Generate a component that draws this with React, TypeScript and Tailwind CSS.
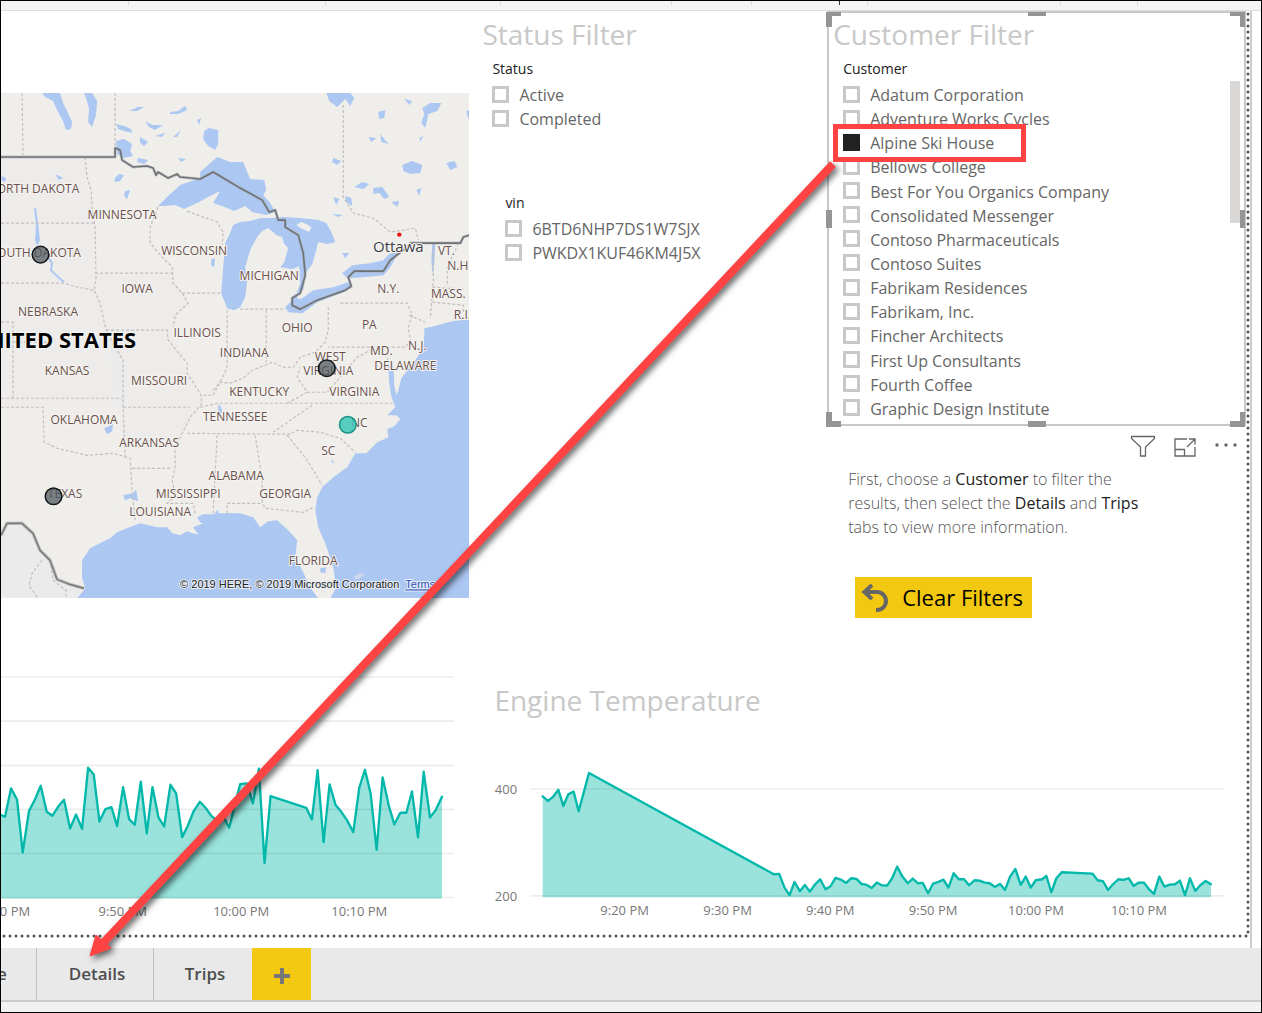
import React from "react";

const LAND = "#efeeea";
const WATER = "#abc7f2";

type Label = [string, number, number];

const STATES: Label[] = [
  ["ORTH DAKOTA", 38, 193], ["MINNESOTA", 122, 219], ["OUTH DAKOTA", 39, 257],
  ["WISCONSIN", 194, 255], ["IOWA", 137, 293], ["NEBRASKA", 48, 316],
  ["MICHIGAN", 269, 280], ["ILLINOIS", 197, 337], ["INDIANA", 244, 357],
  ["OHIO", 297, 332], ["PA", 369, 329], ["N.Y.", 388, 293], ["VT.", 446, 255],
  ["N.H.", 459, 270], ["MASS.", 448, 298], ["R.I.", 462, 319], ["N.J.", 417, 350],
  ["MD.", 381, 355], ["DELAWARE", 405, 370], ["WEST", 330, 361],
  ["VIRGINIA", 328, 375], ["VIRGINIA", 354, 396], ["KENTUCKY", 259, 396],
  ["KANSAS", 67, 375], ["MISSOURI", 159, 385], ["OKLAHOMA", 84, 424],
  ["ARKANSAS", 149, 447], ["TENNESSEE", 235, 421], ["NC", 359, 427], ["SC", 328, 455],
  ["TEXAS", 65, 498], ["MISSISSIPPI", 188, 498], ["ALABAMA", 236, 480],
  ["GEORGIA", 285, 498], ["LOUISIANA", 160, 516], ["FLORIDA", 313, 565],
];

const BORDERS = [
  "M22 93L23 155", "M115 93V148", "M85 157L87 177L91 190L92 207L95 227L96 280L94 290L100 303L106 330L117 350L123 360L123 407L125 457",
  "M1 223H95", "M1 283H63L78 287L93 290", "M95 273H172",
  "M158 207L150 227L150 243L163 258L172 267L173 283L182 293L188 303L175 315L173 327",
  "M182 293H222", "M106 330H167L168 340L187 363L187 373L200 393L202 403L190 417L175 447L175 467L172 480L175 495L167 503H193L195 513",
  "M227 310V365L225 372L213 395L203 395", "M213 390L220 382L230 383L243 378L252 370L265 365L272 362L283 367L293 367L300 357L315 352L325 342L328 330V307",
  "M187 211L203 217L217 222L223 232L222 245", "M240 309H285", "M266 310V362", "M340 303H407L412 315L408 327L410 340L405 347H328",
  "M433 243V280L430 318", "M458 243L447 267V285", "M432 287L463 289", "M432 302L463 305V312",
  "M343 105V197L353 213L373 218L390 232L415 228L418 240", "M409 315L425 322",
  "M1 407H43L44 442L57 448L87 455L113 453L130 458L132 490L135 520", "M1 398H122",
  "M1 322H13V398", "M14 342H50", "M123 407H190", "M200 407L218 403H393", "M187 433L290 434",
  "M217 435L213 513", "M255 435L262 480V503L265 508L303 512L313 507", "M227 513V503H262",
  "M312 405L293 418L273 432", "M287 435L307 460L322 485", "M287 435L297 430L320 432L340 438L355 452",
  "M287 403L307 392L297 377L300 367", "M307 392H327L340 377L357 357L370 350L385 355L388 360",
  "M132 468H172", "M42 560L32 573L29 585L38 598", "M50 560L53 580L66 590V598",
];

const LAKES = [
  "M42 93L60 93L63 103L68 113L72 122L71 129L66 130L63 121L58 112L53 101L45 97Z",
  "M84 93H92L97 101L96 115L92 127L88 122L89 109L86 98Z",
  "M204 131L209 128L218 130L218 144L215 150L208 146L203 139Z",
  "M116 141L124 139L132 144L130 151L133 156L123 158L117 154Z",
  "M116 124L124 126L131 129L132 133L124 131L118 129Z", "M145 121L152 125L163 125L155 130L149 127Z",
  "M170 112L178 111L185 106L187 110L178 114L170 114Z", "M129 111L138 107L144 107L137 111Z",
  "M140 137L148 142L144 146L140 143Z", "M155 136L165 133L162 137Z", "M197 120L201 118L199 125Z",
  "M173 137L181 130L177 137Z", "M138 158L148 160L144 164L137 162Z", "M178 158L186 159L181 162Z",
  "M115 178L119 174L124 175L120 181L114 182Z", "M125 191L130 190L127 199L124 196Z",
  "M55 174L63 178L59 180Z", "M2 176L6 178L5 182L1 180Z", "M211 259L215 258L214 267L211 265Z",
  "M326 93H350L354 98L350 106L345 99L337 107L329 101Z", "M378 112L385 110L384 118L379 119Z",
  "M422 108L430 103L441 103L437 111L428 114L425 128L421 123L424 114Z",
  "M404 99L412 101L409 105Z", "M368 137L376 138L371 142Z", "M380 134L388 144L381 142Z",
  "M402 165L412 161L422 165L420 173L410 174L403 171Z", "M446 163L454 161L457 167L450 170Z",
  "M333 158L341 161L337 165L332 162Z", "M354 187L362 182L369 184L363 189Z",
  "M373 188L382 187L389 197L384 199L379 193L373 194Z", "M391 202L399 201L397 207Z",
  "M345 196L351 198L352 206L346 202Z", "M333 197L339 199L336 205Z", "M332 214L343 215L338 217Z",
  "M342 253L349 253L345 258Z", "M416 190L421 188L419 196Z", "M419 138L423 136L420 142Z", "M466 111L469 110V120L467 116Z",
  "M432 244L435 244L434 262L432 275L431 258Z", "M104 428L113 424L112 431L107 434Z",
  "M123 495L133 493L136 489L138 501L130 498L125 500Z", "M320 568L326 567L325 573L320 572Z",
  "M218 405L220 405L222 411L220 416L218 413Z", "M110 504L117 508L114 506Z", "M331 459L334 462L332 463Z",
];

const COUNTRY_BORDER =
  "M1 157H115V148L120 150L122 160L133 167L147 166L153 168L156 175L158 172L168 178L177 174L180 177L200 179L213 172L240 188L262 200L269 212L275 210L278 220L285 220L285 227L298 235L303 253L305 275L300 293L292 298L292 305L300 309L317 300L345 290L351 286L348 277L354 271H383L390 260L407 247L410 243H460L463 237L469 235";
const MEXICO_BORDER = "M1 535L7 523H22L33 533L40 550L50 560L57 579L70 584L84 588";

function MapVisual() {
  return (
    <svg viewBox="1 93 468 505" className="block h-auto w-full" role="img" aria-label="Vehicle locations map">
      <rect x="1" y="93" width="468" height="505" fill={LAND} />
      <g fill="#ebebeb">
        <path d="M1 157H85L92 207L95 223V280L106 330L123 360V407H1Z" opacity=".6" />
        <path d="M96 273H172L188 303L173 327L187 373L202 403L175 447H125L106 330Z" opacity=".6" />
        <path d="M1 535L7 523H22L50 560L57 579L83 588L77 598H1Z" />
      </g>
      <g fill={WATER}>
        <path d="M158 206L167 197L180 185L200 178L200 172L208 165L217 157L230 162H243L250 179L264 180L266 190L263 195L270 203L275 212L266 215L252 212L245 206L234 211L222 206L213 203L220 191L208 197L199 202L184 209L175 205L163 206Z" />
        <path d="M233 225L230 233L225 243L223 267L221 293L227 308L234 310L240 307L245 297L247 280L245 267L250 250L257 237L262 231L268 228L276 235L282 237L284 244L288 248L284 262L280 267L292 269L299 266L300 283L296 294L303 290L306 272L312 264L316 250L318 242L327 244L335 242L331 232L326 223L318 220L300 218L283 217L271 218L260 218L250 221L240 222Z" />
        <path d="M285 307L292 300L302 298L313 290L333 287L348 282L352 287L343 292L317 302L302 313L288 312Z" />
        <path d="M342 273L352 265L370 263L383 260L389 254L399 251L390 267L383 275L363 277L347 278Z" />
        <path d="M290 298L296 293L298 300L293 302Z" />
        <path d="M469 319L452 321L437 325L424 328L424 333L423 347L417 357L407 370L401 378L398 390L396 395L394 385L393 366L390 361L388 366L389 383L391 396L395 407L387 415H396L400 419L394 426L387 429L388 437L377 442L366 453H355L347 467L333 477L322 487L317 497L315 510L318 527L325 543L333 567L336 587L330 598H469Z" />
        <path d="M318 598L310 587L302 570L295 557L297 540L288 530L277 520L268 521L260 527L253 517L240 513L218 513L218 509L214 514L203 514L197 517L200 522L203 523L193 527L198 534L203 535L192 533L187 531L180 535L172 533L167 527H157L140 523L127 528L117 532L110 538L100 543L90 548L82 560V577L85 588L77 598Z" />
        <path d="M34 208L36 208L38 223L40 240L37 246L35 240L36 226Z" />
        {LAKES.map((d) => <path key={d} d={d} />)}
      </g>
      <path d="M48 257L52 263L51 270L56 275L64 282" fill="none" stroke={WATER} strokeWidth="2" />
      <g fill={LAND}>
        <path d="M296 225L301 222L306 224L311 227L309 232L302 229Z" />
        <path d="M426 324L438 319L454 316L447 321L430 327Z" />
        <path d="M396 352L403 350L407 362L400 375L397 363Z" />
        <path d="M353 577L359 573L365 574L357 579Z" opacity=".5" />
      </g>
      <g fill="none" stroke="#c4bebd" strokeWidth="1.2" strokeDasharray="3 2">
        {BORDERS.map((d) => <path key={d} d={d} />)}
      </g>
      <g fill="none" strokeLinejoin="round">
        <path d={COUNTRY_BORDER} stroke="#a9adb3" strokeWidth="3" opacity=".6" />
        <path d={MEXICO_BORDER} stroke="#b5b5b5" strokeWidth="3.5" opacity=".7" />
        <path d={COUNTRY_BORDER} stroke="#6e7176" strokeWidth="1.6" />
        <path d={MEXICO_BORDER} stroke="#7c7c7c" strokeWidth="1.6" />
      </g>
      <g fontFamily="'Open Sans', 'Noto Sans', sans-serif" fontSize="12" fill="#6a504b" textAnchor="middle" stroke="#f5f4f2" strokeWidth="2" strokeLinejoin="round" paintOrder="stroke">
        {STATES.map(([name, x, y]) => <text key={`${name}${y}`} x={x} y={y}>{name}</text>)}
        <text x="398" y="252" fontSize="15" fill="#3f3f46">Ottawa</text>
        <text x="136" y="348" fontSize="22" fontWeight="700" fill="#000" textAnchor="end">NITED STATES</text>
      </g>
      <circle cx="399" cy="234.500" r="2.200" fill="#e8140c" />
      <g strokeWidth="1.500">
        {[[40.500, 254.500], [326.500, 368], [53.500, 496]].map(([x, y]) => (
          <circle key={x} cx={x} cy={y} r="8.300" fill="#4b555a" fillOpacity=".72" stroke="#14181a" />
        ))}
        <circle cx="347.500" cy="424.500" r="8.300" fill="#3cc7b8" fillOpacity=".85" stroke="#169386" />
      </g>
      <g fontFamily="'Liberation Sans', Arial, sans-serif" fontSize="11" fill="#222" stroke="#e9eef6" strokeWidth="2" strokeLinejoin="round" paintOrder="stroke">
        <text x="399" y="588" textAnchor="end">© 2019 HERE, © 2019 Microsoft Corporation</text>
        <a href="#terms"><text x="405" y="588" fill="#2b50b8" textDecoration="underline">Terms</text></a>
      </g>
    </svg>
  );
}

// Chart samples are in thirds of a pixel.
const SPEED =
  "0,463 15,470 33,385 51,418 68,577 87,452 104,420 122,377 140,455 157,467 174,440 192,419 210,505 228,463 246,506 264,323 281,343 298,484 316,447 334,441 351,498 369,381 387,477 404,494 422,365 440,520 457,381 475,472 492,499 511,374 528,400 546,531 563,497 581,452 599,425 616,443 634,468 650,480 670,470 687,503 705,430 720,372 740,370 758,430 776,326 793,608 811,408 918,443 935,478 952,330 970,546 988,373 1006,435 1023,455 1040,480 1059,516 1077,383 1094,329 1111,400 1129,569 1147,352 1165,435 1182,493 1200,458 1218,458 1235,394 1253,532 1270,335 1289,472 1306,450 1325,410";
const TEMPERATURE =
  "188,379 204,393 219,381 235,359 250,408 265,373 281,365 296,424 312,365 327,309 882,613 898,612 914,653 929,676 944,636 960,664 975,645 990,665 1006,643 1021,628 1037,658 1052,649 1067,624 1083,629 1099,639 1114,625 1130,627 1145,642 1161,645 1176,654 1191,638 1206,646 1222,647 1237,625 1252,590 1268,620 1284,640 1299,626 1314,640 1329,639 1345,670 1360,641 1376,636 1391,629 1406,653 1422,610 1437,628 1453,628 1468,646 1484,631 1499,632 1515,638 1530,640 1545,651 1561,642 1576,660 1591,620 1607,597 1623,645 1638,620 1653,653 1668,631 1687,628 1700,618 1715,667 1730,625 1746,607 1838,611 1854,631 1870,634 1885,660 1900,643 1916,628 1931,630 1947,625 1962,648 1977,638 1993,638 2008,658 2023,672 2039,620 2054,650 2070,644 2086,643 2101,632 2116,676 2131,625 2147,663 2162,646 2178,633 2194,643";

interface AreaProps {
  title: string;
  viewBox: string;
  points: string;
  x0: number;
  x1: number;
  base: number;
  grid: number[];
  gridX: [number, number];
  labels: Label[];
}

function AreaChart({ title, viewBox, points, x0, x1, base, grid, gridX, labels }: AreaProps) {
  return (
    <svg viewBox={viewBox} className="block h-auto w-full" role="img" aria-label={title}>
      <polygon points={`${x0},${base} ${points} ${x1},${base}`} fill="#99e3dc" />
      {grid.map((y) => (
        <line key={y} x1={gridX[0]} x2={gridX[1]} y1={y} y2={y} stroke="#000" strokeOpacity=".07" strokeWidth="5" />
      ))}
      <polyline points={points} fill="none" stroke="#01b8aa" strokeWidth="7" strokeLinecap="round" strokeLinejoin="round" />
      <g fontFamily="'Open Sans', 'Noto Sans', sans-serif" fontSize="39" fill="#777" textAnchor="middle">
        {labels.map(([text, x, y]) => <text key={text} x={x} y={y}>{text}</text>)}
      </g>
    </svg>
  );
}

function Check({ label, checked = false }: { label: string; checked?: boolean }) {
  return (
    <label className="flex h-6 items-center gap-[10px] whitespace-nowrap text-base text-[#666]">
      <input
        type="checkbox"
        defaultChecked={checked}
        className="mb-[2px] size-[17px] shrink-0 appearance-none border-[3px] border-[#c8c8c8] bg-white checked:border-[#212121] checked:bg-[#212121]"
      />
      {label}
    </label>
  );
}

const CUSTOMERS = [
  "Adatum Corporation", "Adventure Works Cycles", "Alpine Ski House", "Bellows College",
  "Best For You Organics Company", "Consolidated Messenger", "Contoso Pharmaceuticals",
  "Contoso Suites", "Fabrikam Residences", "Fabrikam, Inc.", "Fincher Architects",
  "First Up Consultants", "Fourth Coffee", "Graphic Design Institute",
];

function Handles() {
  const c = "absolute border-[#959595]";
  return (
    <>
      <i className={`${c} -left-[3px] -top-[1px] size-[15px] border-l-[6px] border-t-[4px]`} />
      <i className={`${c} -right-[1px] -top-[1px] size-[15px] border-r-[5px] border-t-[4px]`} />
      <i className={`${c} -bottom-[3px] -left-[3px] size-[15px] border-b-[6px] border-l-[6px]`} />
      <i className={`${c} -bottom-[3px] -right-[1px] size-[15px] border-b-[6px] border-r-[5px]`} />
      <i className="absolute -top-[1px] left-1/2 h-[4px] w-[18px] -translate-x-1/2 bg-[#959595]" />
      <i className="absolute -bottom-[3px] left-1/2 h-[6px] w-[18px] -translate-x-1/2 bg-[#959595]" />
      <i className="absolute -left-[3px] top-1/2 h-[18px] w-[6px] -translate-y-1/2 bg-[#959595]" />
      <i className="absolute -right-[1px] top-1/2 h-[18px] w-[5px] -translate-y-1/2 bg-[#959595]" />
    </>
  );
}

const TITLE = "whitespace-nowrap pb-[2px] text-[28px] leading-[42px] font-normal text-[#c8c8c8]";

function CustomerFilter() {
  return (
    <section className="relative h-[415px] border-2 border-[#c8c8c8] pl-1">
      <Handles />
      <h2 className={TITLE}>Customer Filter</h2>
      <div className="flex justify-between">
        <fieldset className="pl-[10px]">
          <legend className="pb-[2px] text-sm leading-6 text-[#212121]">Customer</legend>
          <div className="flex h-[338px] flex-col justify-between">
            {CUSTOMERS.map((name) => <Check key={name} label={name} checked={name === "Alpine Ski House"} />)}
          </div>
        </fieldset>
        <div className="mr-1 mt-6 h-[142px] w-[10px] bg-[#d9d8d6]" />
      </div>
    </section>
  );
}

function VisualActions() {
  return (
    <div className="flex h-[41px] items-center justify-end gap-[18px] pr-2 text-[#666]">
      <button aria-label="Filters">
        <svg width="26" height="24" viewBox="0 0 26 24" fill="none" stroke="currentColor" strokeWidth="1.300">
          <path d="M1.500 1.500H24.500V3.500L15.500 12V21H10.500V12L1.500 3.500Z" />
        </svg>
      </button>
      <button aria-label="Focus mode">
        <svg width="22" height="20" viewBox="0 0 22 20" fill="none" stroke="currentColor" strokeWidth="1.300">
          <path d="M13 2H1V19H21V10M1 12.500H10.500V19M13 10L21 2M15 2H21V7.500" />
        </svg>
      </button>
      <button aria-label="More options">
        <svg width="24" height="16" viewBox="0 0 24 16" fill="currentColor">
          <circle cx="3" cy="6" r="1.700" /><circle cx="12" cy="6" r="1.700" /><circle cx="21" cy="6" r="1.700" />
        </svg>
      </button>
    </div>
  );
}

function Callout() {
  return (
    <svg width="1262" height="1013" viewBox="0 0 1262 1013" className="pointer-events-none absolute -left-px -top-px" aria-hidden="true">
      <g style={{ filter: "drop-shadow(3px 3px 3px rgba(0,0,0,.6))" }}>
        <path d="M833 164L104 942" stroke="#ff4343" strokeWidth="8" fill="none" />
        <path d="M90 956L96 935L111 948Z" fill="#ff4343" stroke="#ff4343" />
      </g>
      <rect x="835.500" y="126.500" width="188" height="33" fill="none" stroke="#ff4343" strokeWidth="5" />
    </svg>
  );
}

const TICKS = [128, 325, 500, 671, 751, 867, 1060, 1137];

export default function App() {
  return (
    <div className="relative flex min-h-screen flex-col overflow-hidden border border-black bg-white font-['Open_Sans','Noto_Sans',sans-serif]">
      <header className="relative h-[10px] border-b border-[#dedede] bg-[#f4f4f7]">
        {TICKS.map((x) => <i key={x} className="absolute top-0 h-1 w-px bg-[#e0d5d8]" style={{ left: x - 1 }} />)}
        <i className="absolute left-[838px] top-0 h-1 w-px bg-[#333]" />
      </header>

      <main className="mr-[9px] flex flex-1 flex-col border-r-2 border-[#cccccc] pb-[10px]">
        <div className="relative flex flex-1 items-start">
          <svg className="pointer-events-none absolute inset-0 size-full" aria-hidden="true">
            <g stroke="#555" strokeWidth="3" strokeDasharray="0 6" strokeLinecap="round">
              <svg x="100%" overflow="visible"><line x1="-2" x2="-2" y1="3" y2="924" /></svg>
              <svg y="100%" overflow="visible"><line x1="3" x2="100%" y1="-2" y2="-2" /></svg>
            </g>
          </svg>

          <div className="w-[37.500%] shrink-0 pt-[82px]">
            <MapVisual />
            <div className="mr-[14px] mt-[62px]">
              <AreaChart
                title="Engine speed"
                viewBox="3 0 1362 780"
                points={SPEED}
                x0={0}
                x1={1325}
                base={715}
                grid={[51, 183, 316, 448, 580, 712]}
                gridX={[0, 1362]}
                labels={[["0 PM", 45, 766], ["9:50 PM", 368, 766], ["10:00 PM", 723, 766], ["10:10 PM", 1077, 766]]}
              />
            </div>
          </div>

          <div className="min-w-0 flex-1 pr-1">
            <div className="grid grid-cols-[358fr_419fr] items-start">
              <div className="pl-[13px] pt-[2px]">
                <h2 className={TITLE}>Status Filter</h2>
                <fieldset className="pl-[10px]">
                  <legend className="pb-[2px] text-sm leading-6 text-[#212121]">Status</legend>
                  <Check label="Active" />
                  <Check label="Completed" />
                </fieldset>
                <fieldset className="mt-[60px] pl-[23px]">
                  <legend className="pb-[2px] text-sm leading-6 text-[#212121]">vin</legend>
                  <Check label="6BTD6NHP7DS1W7SJX" />
                  <Check label="PWKDX1KUF46KM4J5X" />
                </fieldset>
              </div>

              <div>
                <CustomerFilter />
                <VisualActions />
                <p className="pl-[21px] text-base leading-6 font-light text-[#555]">
                  First, choose a <b className="font-normal text-[#212121]">Customer</b> to filter the<br />
                  results, then select the <b className="font-normal text-[#212121]">Details</b> and <b className="font-normal text-[#212121]">Trips</b><br />
                  tabs to view more information.
                </p>
                <button className="ml-[28px] mt-[38px] flex h-[41px] w-[177px] items-center gap-3 whitespace-nowrap bg-[#f2c811] pl-[6px] text-[22px] text-black">
                  <svg width="29" height="30" viewBox="0 0 29 30" fill="none" stroke="#666" strokeWidth="4" className="shrink-0">
                    <path d="M11 2L3.500 9L11 16M4 9H16A9 9 0 0 1 16 27H15" />
                  </svg>
                  Clear Filters
                </button>
              </div>
            </div>

            <section className="mt-[61px]">
              <h2 className={`${TITLE} pl-[25px]`}>Engine Temperature</h2>
              <AreaChart
                title="Engine temperature"
                viewBox="-33 159 2331 591"
                points={TEMPERATURE}
                x0={188}
                x1={2194}
                base={682}
                grid={[357, 678]}
                gridX={[150, 2232]}
                labels={[
                  ["400", 78, 371], ["200", 78, 692], ["9:20 PM", 434, 735], ["9:30 PM", 743, 735],
                  ["9:40 PM", 1051, 735], ["9:50 PM", 1360, 735], ["10:00 PM", 1669, 735], ["10:10 PM", 1978, 735],
                ]}
              />
            </section>
          </div>
        </div>
      </main>

      <footer>
        <nav className="flex h-[54px] border-b-2 border-[#cbcbcb] bg-[#e9e9e9] text-[17px] font-semibold text-[#4d4d4d]">
          <button className="w-9 border-r border-[#c0c0c0] text-left"><span className="-ml-1">e</span></button>
          <button className="w-[117px] border-r border-[#c0c0c0] pl-1">Details</button>
          <button className="w-[98px] pl-1">Trips</button>
          <button aria-label="Add page" className="grid w-[59px] place-items-center bg-[#f2c811]">
            <svg width="18" height="18" viewBox="0 0 18 18" className="mt-1" fill="none" stroke="#777" strokeWidth="4">
              <path d="M9 1V17M1 9H17" />
            </svg>
          </button>
        </nav>
        <div className="h-[10px] bg-[#f3f1ef]" />
      </footer>

      <Callout />
    </div>
  );
}
